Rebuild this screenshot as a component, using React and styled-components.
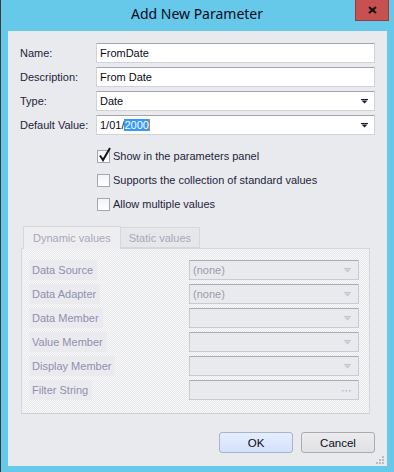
import React from "react";
import styled, { createGlobalStyle } from "styled-components";

const GlobalStyle = createGlobalStyle`
  html, body {
    margin: 0;
    padding: 0;
    background: #66c9e9;
  }
  * {
    box-sizing: border-box;
  }
`;

const Window = styled.div`
  width: 394px;
  height: 472px;
  background: #66c9e9;
  border-left: 1px solid #3a3a3a;
  padding: 0 7px 6px 7px;
  display: flex;
  flex-direction: column;
  font-family: "Liberation Sans", Arial, sans-serif;
  font-size: 11px;
  color: #1e1e3a;
`;

const TitleBar = styled.div`
  height: 31px;
  flex-shrink: 0;
  display: grid;
  grid-template-columns: 1fr auto 1fr;
  align-items: start;
  margin: 0 -7px 0 -8px;
`;

const Title = styled.div`
  grid-column: 2;
  padding-top: 4px;
  font-family: "Noto Sans", sans-serif;
  font-size: 14px;
  color: #0a0a1e;
`;

const CloseButton = styled.div`
  grid-column: 3;
  justify-self: end;
  margin-right: 5px;
  width: 34px;
  height: 21px;
  background: #c75050;
  border: 1px solid #9c3a3a;
  border-top: none;
  display: flex;
  align-items: center;
  justify-content: center;
`;

const Client = styled.div`
  flex: 1;
  min-height: 0;
  position: relative;
  background: #e9eaee;
  padding: 12px 12px 0 12px;
  display: flex;
  flex-direction: column;
`;

const FormGrid = styled.div`
  display: grid;
  grid-template-columns: 76px 1fr;
  grid-auto-rows: 20px;
  row-gap: 4px;
  align-items: center;
`;

const Label = styled.div`
  line-height: 20px;
`;

const Input = styled.div`
  height: 20px;
  background: #fff;
  border: 1px solid #d2d3da;
  border-top-color: #a3a4ae;
  display: flex;
  align-items: center;
  justify-content: space-between;
  padding: 0 6px 0 3px;
  color: #0a0a14;
`;

const Selected = styled.span`
  background: #3399ff;
  color: #fff;
  border-right: 1px solid #d8802c;
`;

const Checks = styled.div`
  display: flex;
  flex-direction: column;
  gap: 8px;
  margin: 13px 0 0 77px;
`;

const CheckRow = styled.label`
  display: flex;
  align-items: center;
  gap: 3px;
  height: 16px;
  line-height: 16px;
`;

const Box = styled.span`
  position: relative;
  flex-shrink: 0;
  width: 13px;
  height: 13px;
  background: linear-gradient(#f4f4f6, #ffffff);
  border: 1px solid #a4a6b4;
  display: inline-block;
`;

const Tick = styled.svg`
  position: absolute;
  left: 1px;
  top: -4px;
`;

const TabArea = styled.div`
  margin: 14px 5px 0 1px;
  display: flex;
  flex-direction: column;
`;

const TabStrip = styled.div`
  display: flex;
  align-items: flex-end;
  padding-left: 2px;
  height: 22px;
`;

const Tab = styled.div`
  height: ${(p) => (p.$active ? "23px" : "21px")};
  padding: 0 ${(p) => (p.$active ? "9px" : "8px")};
  display: flex;
  align-items: center;
  color: #a6a7b8;
  background: ${(p) => (p.$active ? "#eeeef1" : "#e6e7eb")};
  border: 1px solid #d6d7dd;
  border-bottom: ${(p) => (p.$active ? "none" : "1px solid #d6d7dd")};
  margin-left: ${(p) => (p.$active ? "0" : "-1px")};
  margin-bottom: ${(p) => (p.$active ? "-1px" : "0")};
  position: relative;
  z-index: ${(p) => (p.$active ? 1 : 0)};
`;

const Panel = styled.div`
  height: 166px;
  border: 1px solid #d6d7dd;
  border-bottom-color: #cfd0d6;
  background: repeating-conic-gradient(#fafafb 0 25%, #e5e6ea 0 50%) 0 0 / 2px 2px;
  padding: 11px 10px 0 10px;
  display: grid;
  grid-template-columns: 1fr 170px;
  grid-auto-rows: 20px;
  row-gap: 4px;
`;

const PanelLabel = styled.div`
  justify-self: start;
  background: #ebebef;
  color: #8e8fae;
  line-height: 20px;
  padding: 0 4px 0 3px;
  margin-left: -3px;
`;

const Combo = styled.div`
  background: #e9eaee;
  border: 1px solid #c9cad2;
  border-top-color: #a9aab4;
  display: flex;
  align-items: center;
  justify-content: space-between;
  padding: 0 7px 0 3px;
  color: #9a9bab;
`;

const Footer = styled.div`
  display: flex;
  justify-content: flex-end;
  gap: 8px;
  margin-top: 18px;
`;

const Button = styled.div`
  width: 74px;
  height: 21px;
  border: 1px solid ${(p) => (p.$primary ? "#a9b4c8" : "#acacb0")};
  border-radius: 3px;
  background: ${(p) =>
    p.$primary
      ? "linear-gradient(#e6eeff, #d4e1fb)"
      : "linear-gradient(#ececee, #e1e1e4)"};
  display: flex;
  align-items: center;
  justify-content: center;
  color: #0a0a14;
  font-size: 11.5px;
`;

const Grip = styled.svg`
  position: absolute;
  right: 2px;
  bottom: 1px;
`;

const Arrow = ({ color = "#1a1a2e" }) => (
  <svg width="7" height="5" viewBox="0 0 7 5">
    <rect x="0" y="0" width="7" height="1" fill={color} />
    <path d="M0.5 1.5h6L3.5 4.5z" fill={color} />
  </svg>
);

const Dots = () => (
  <svg width="9" height="3" viewBox="0 0 9 3">
    <rect x="0" y="1" width="1.5" height="1.5" fill="#b8b9c4" />
    <rect x="3.5" y="1" width="1.5" height="1.5" fill="#b8b9c4" />
    <rect x="7" y="1" width="1.5" height="1.5" fill="#b8b9c4" />
  </svg>
);

const dynamicRows = [
  { label: "Data Source", value: "(none)" },
  { label: "Data Adapter", value: "(none)" },
  { label: "Data Member", value: "" },
  { label: "Value Member", value: "" },
  { label: "Display Member", value: "" },
  { label: "Filter String", value: "", dots: true },
];

function Check({ checked, children }) {
  return (
    <CheckRow>
      <Box>
        {checked && (
          <Tick width="12" height="15" viewBox="0 0 12 15">
            <path
              d="M1 8.5 L4 13 L11 1"
              stroke="#15151f"
              strokeWidth="2"
              fill="none"
            />
          </Tick>
        )}
      </Box>
      {children}
    </CheckRow>
  );
}

export default function App() {
  return (
    <>
      <GlobalStyle />
      <Window>
        <TitleBar>
          <Title>Add New Parameter</Title>
          <CloseButton>
            <svg width="9" height="8" viewBox="0 0 9 8">
              <path d="M1 1L8 7M8 1L1 7" stroke="#111" strokeWidth="2" />
            </svg>
          </CloseButton>
        </TitleBar>
        <Client>
          <FormGrid>
            <Label>Name:</Label>
            <Input>FromDate</Input>
            <Label>Description:</Label>
            <Input>From Date</Input>
            <Label>Type:</Label>
            <Input>
              Date
              <Arrow />
            </Input>
            <Label>Default Value:</Label>
            <Input>
              <span>
                1/01/<Selected>2000</Selected>
              </span>
              <Arrow />
            </Input>
          </FormGrid>

          <Checks>
            <Check checked>Show in the parameters panel</Check>
            <Check>Supports the collection of standard values</Check>
            <Check>Allow multiple values</Check>
          </Checks>

          <TabArea>
            <TabStrip>
              <Tab $active>Dynamic values</Tab>
              <Tab>Static values</Tab>
            </TabStrip>
            <Panel>
              {dynamicRows.map((r) => (
                <React.Fragment key={r.label}>
                  <PanelLabel>{r.label}</PanelLabel>
                  <Combo>
                    <span>{r.value}</span>
                    {r.dots ? <Dots /> : <Arrow color="#c3c4cc" />}
                  </Combo>
                </React.Fragment>
              ))}
            </Panel>
          </TabArea>

          <Footer>
            <Button $primary>OK</Button>
            <Button>Cancel</Button>
          </Footer>

          <Grip width="10" height="10" viewBox="0 0 10 10">
            <rect x="7" y="1" width="2" height="2" fill="#b9bac4" />
            <rect x="4" y="4" width="2" height="2" fill="#b9bac4" />
            <rect x="7" y="4" width="2" height="2" fill="#b9bac4" />
            <rect x="1" y="7" width="2" height="2" fill="#b9bac4" />
            <rect x="4" y="7" width="2" height="2" fill="#b9bac4" />
            <rect x="7" y="7" width="2" height="2" fill="#b9bac4" />
          </Grip>
        </Client>
      </Window>
    </>
  );
}
